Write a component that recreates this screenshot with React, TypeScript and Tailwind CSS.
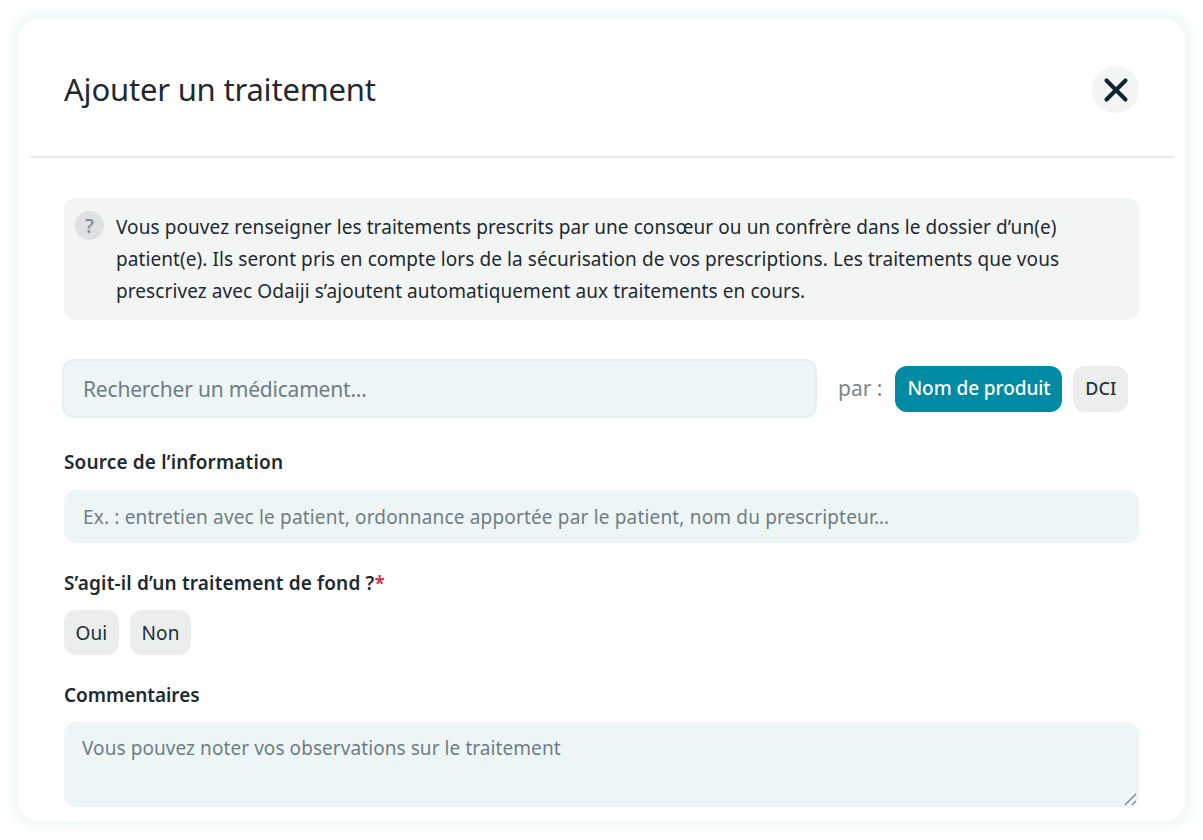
import React from 'react';
import { X } from 'lucide-react';

const font = "font-['Noto_Sans',sans-serif]";

const App: React.FC = () => {
  return (
    <div className={`${font} w-[1203px] h-[840px] bg-white p-[18px] overflow-hidden text-[#17282f]`}>
      <div className="h-[804px] rounded-[22px] bg-white px-3 shadow-[0_0_7px_8px_#f1f9f9] overflow-hidden">
        {/* Header */}
        <div className="h-[140px] flex items-center justify-between border-b-2 border-[#e8ebec] px-[34px] pt-[5px]">
          <h1 className="text-[31px] tracking-[-0.2px] text-[#23282f]">Ajouter un traitement</h1>
          <button className="w-[47px] h-[47px] rounded-full bg-[#f3f5f4] flex items-center justify-center">
            <X size={38} strokeWidth={2.6} className="text-[#10262e]" />
          </button>
        </div>

        <div className="px-[34px] pt-[40px]">
          {/* Info box */}
          <div className="h-[122px] rounded-[12px] bg-[#f3f5f4] pl-[11px] pr-[60px] pt-[13px] flex gap-[12px]">
            <span className="w-[29px] h-[29px] shrink-0 rounded-full bg-[#dde1e3] flex items-center justify-center text-[20px] font-medium text-[#7d8a90]">?</span>
            <p className="text-[19px] leading-[32px] tracking-[0.08px] text-[#1d2a30]">
              Vous pouvez renseigner les traitements prescrits par une consœur ou un confrère dans le dossier d’un(e) patient(e). Ils seront pris en compte lors de la sécurisation de vos prescriptions. Les traitements que vous prescrivez avec Odaiji s’ajoutent automatiquement aux traitements en cours.
            </p>
          </div>

          {/* Search */}
          <div className="mt-[39px] -ml-[2px] flex items-center">
            <input
              placeholder="Rechercher un médicament..."
              className="w-[755px] h-[59px] rounded-[12px] bg-[#eef5f7] border-2 border-[#e2f0f2] pl-[19px] text-[21px] tracking-[-0.2px] outline-none placeholder:text-[#6f7d83]"
            />
            <span className="ml-[21px] text-[21px] text-[#7a868b]">par :</span>
            <button className="ml-[13px] h-[46px] w-[167px] rounded-[12px] bg-[#008ba5] text-white text-[19px] font-medium tracking-[-0.07px]">Nom de produit</button>
            <button className="ml-[11px] h-[46px] w-[55px] rounded-[12px] bg-[#eceeed] text-[18px] font-medium tracking-[0.1px] text-[#24343b]">DCI</button>
          </div>

          {/* Source */}
          <label className="block mt-[30px] text-[19px] leading-[28px] font-semibold tracking-[0.15px] text-[#1d2a30]">Source de l’information</label>
          <input
            placeholder="Ex. : entretien avec le patient, ordonnance apportée par le patient, nom du prescripteur…"
            className="block mt-[14px] w-full h-[53px] rounded-[12px] bg-[#eef5f7] pl-[19px] text-[19px] tracking-[0.17px] outline-none placeholder:text-[#6f7d83]"
          />

          {/* Fond */}
          <div className="mt-[26px] text-[19px] leading-[28px] font-semibold tracking-[0.15px] text-[#1d2a30]">
            S’agit-il d’un traitement de fond ?<span className="text-[#e8213f]">*</span>
          </div>
          <div className="mt-[13px] flex gap-[11px]">
            <button className="h-[45px] w-[55px] rounded-[12px] bg-[#eceeed] pt-[1px] text-[19px] tracking-[0.1px] text-[#17303a]">Oui</button>
            <button className="h-[45px] w-[61px] rounded-[12px] bg-[#eceeed] pt-[1px] text-[19px] tracking-[0.1px] text-[#17303a]">Non</button>
          </div>

          {/* Commentaires */}
          <label className="block mt-[26px] text-[19px] leading-[28px] font-semibold tracking-[-0.05px] text-[#1d2a30]">Commentaires</label>
          <div className="relative mt-[13px] h-[85px]">
            <textarea
              placeholder="Vous pouvez noter vos observations sur le traitement"
              className="block w-full h-full resize-none rounded-[12px] bg-[#eef5f7] px-[18px] py-[12px] text-[19px] tracking-[0.07px] outline-none placeholder:text-[#6f7d83]"
            />
            <svg className="absolute right-[1px] bottom-[1px] w-[14px] h-[14px]" viewBox="0 0 14 14" fill="none" stroke="#7c8387" strokeWidth="1.3">
              <path d="M1 13 12 2M8 13l4-4" />
            </svg>
          </div>
        </div>
      </div>
    </div>
  );
};

export default App;
